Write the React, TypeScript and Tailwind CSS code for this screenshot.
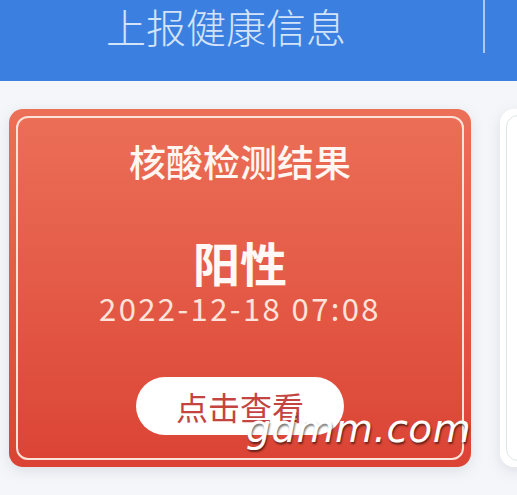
import React from 'react';

const cjk = '"Noto Sans CJK SC", "Noto Sans", sans-serif';

const ResultCard = () => {
    return (
        <div className="relative shrink-0 w-[462px] h-[358px] rounded-[14px] bg-gradient-to-b from-[#ec6f57] to-[#db4334] p-[7px] shadow-[0_4px_14px_rgba(120,130,150,0.18)]">
            <div className="h-full rounded-[12px] border-2 border-[#fbe3da] flex flex-col items-center text-white">
                {/* Title */}
                <div className="mt-[19px] text-[37px] leading-[48px] font-medium text-[#fff6f2]">核酸检测结果</div>

                {/* Result */}
                <div className="mt-[49px] text-[47px] leading-[56px] font-semibold text-[#fff8f5]">阳性</div>
                <div className="mt-[-2px] text-[31px] leading-[40px] font-normal text-[#fde3d9] tracking-[2.4px]">2022-12-18 07:08</div>

                {/* Button */}
                <button className="mt-[49px] w-[208px] h-[58px] rounded-full bg-white text-[#c4453f] text-[32px] leading-[58px]">
                    点击查看
                </button>
            </div>
        </div>
    );
};

const App = () => {
    return (
        <div className="relative w-[517px] h-[495px] overflow-hidden bg-[#f4f6f9]" style={{ fontFamily: cjk }}>
            {/* Header */}
            <div className="h-[81px] bg-[#3b80e1] flex items-start">
                <div className="ml-[106px] mt-[1px] text-[40px] leading-[50px] font-light text-[#d3e3f8]">上报健康信息</div>
                <div className="ml-auto mr-[32px] w-[2px] h-[53px] bg-[#c9dcf5]/80"></div>
            </div>

            {/* Cards row */}
            <div className="flex gap-[29px] pl-[9px] pt-[28px]">
                <ResultCard />
                <div className="shrink-0 w-[300px] h-[358px] rounded-[14px] bg-white p-[6px] shadow-[0_4px_14px_rgba(120,130,150,0.18)]">
                    <div className="h-full rounded-[12px] border border-[#dde6e4]"></div>
                </div>
            </div>

            {/* Watermark */}
            <div
                className="absolute left-[246px] top-[400px] text-[39px] italic text-white tracking-[0.5px] [text-shadow:1px_2px_2px_rgba(0,0,0,0.55)]"
                style={{ fontFamily: '"DejaVu Sans", sans-serif' }}
            >
                gdmm.com
            </div>
        </div>
    );
};

export default App;
